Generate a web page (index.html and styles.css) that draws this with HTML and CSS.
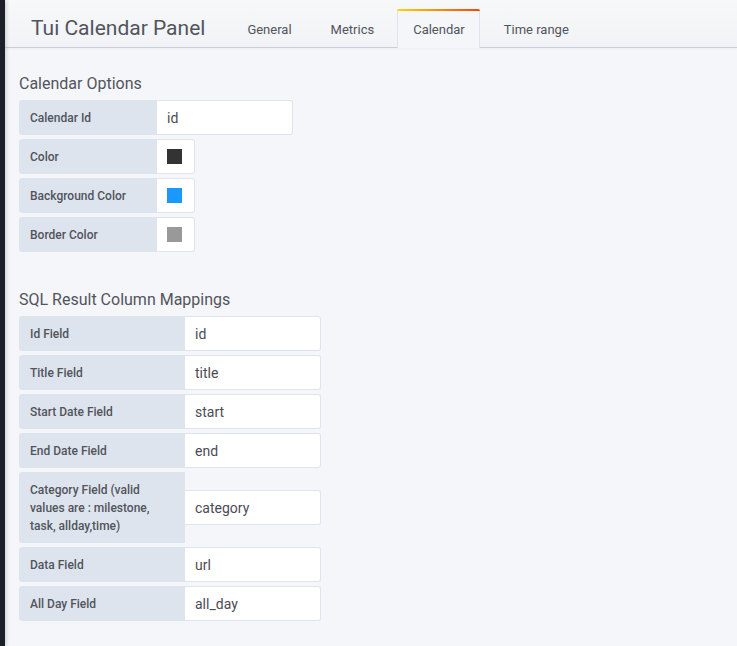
FILE: index.html
```html
<!DOCTYPE html>
<html>
<head>
<meta charset="utf-8">
<link rel="stylesheet" href="styles.css">
</head>
<body>
<div class="app">
  <div class="sidebar"></div>
  <div class="main">
    <header class="edit-header">
      <h2 class="edit-title">Tui Calendar Panel</h2>
      <ul class="tabs">
        <li class="tab">General</li>
        <li class="tab">Metrics</li>
        <li class="tab active">Calendar</li>
        <li class="tab">Time range</li>
      </ul>
    </header>
    <div class="content">
      <section class="section">
        <h5 class="section-heading">Calendar Options</h5>
        <div class="form">
          <span class="label w-short">Calendar Id</span>
          <input class="input" value="id">
        </div>
        <div class="form">
          <span class="label w-short">Color</span>
          <span class="color-box"><span class="swatch swatch-dark"></span></span>
        </div>
        <div class="form">
          <span class="label w-short">Background Color</span>
          <span class="color-box"><span class="swatch swatch-blue"></span></span>
        </div>
        <div class="form">
          <span class="label w-short">Border Color</span>
          <span class="color-box"><span class="swatch swatch-gray"></span></span>
        </div>
      </section>
      <section class="section section-second">
        <h5 class="section-heading">SQL Result Column Mappings</h5>
        <div class="form">
          <span class="label w-long">Id Field</span>
          <input class="input" value="id">
        </div>
        <div class="form">
          <span class="label w-long">Title Field</span>
          <input class="input" value="title">
        </div>
        <div class="form">
          <span class="label w-long">Start Date Field</span>
          <input class="input" value="start">
        </div>
        <div class="form">
          <span class="label w-long">End Date Field</span>
          <input class="input" value="end">
        </div>
        <div class="form form-tall">
          <span class="label w-long label-wrap">Category Field (valid values are : milestone, task, allday,time)</span>
          <input class="input" value="category">
        </div>
        <div class="form">
          <span class="label w-long">Data Field</span>
          <input class="input" value="url">
        </div>
        <div class="form">
          <span class="label w-long">All Day Field</span>
          <input class="input" value="all_day">
        </div>
      </section>
    </div>
  </div>
</div>
</body>
</html>
```

FILE: styles.css
```css
* { box-sizing: border-box; }
html, body {
  margin: 0;
  padding: 0;
  height: 100%;
}
body {
  font-family: Roboto, "Liberation Sans", sans-serif;
  color: #52545c;
  background: #f5f6f9;
}
.app {
  display: flex;
  min-height: 100vh;
}
.sidebar {
  width: 5px;
  flex: 0 0 5px;
  background: #1d2027;
  box-shadow: 1px 0 4px rgba(0, 0, 0, 0.18);
  z-index: 2;
}
.main {
  flex: 1;
  min-width: 0;
}
.edit-header {
  height: 48px;
  display: flex;
  align-items: flex-end;
  padding-left: 26px;
  background: linear-gradient(to bottom, #f7f8fa 0%, #f1f3f6 100%);
  border-bottom: 1px solid #c7d0d9;
  box-shadow: 0 1px 3px rgba(0,0,0,0.04);
}
.edit-title {
  margin: 0 26px 0 0;
  font-size: 21px;
  font-weight: 400;
  color: #52545c;
  line-height: 38px;
  height: 38px;
}
.tabs {
  list-style: none;
  margin: 0 0 -1px 0;
  padding: 0;
  display: flex;
  gap: 8px;
}
.tab {
  position: relative;
  height: 39px;
  padding: 0 14px 0 15px;
  display: flex;
  align-items: center;
  font-size: 13px;
  color: #52545c;
  border: 1px solid transparent;
  border-bottom: none;
}
.tab.active {
  background: #f5f6f9;
  border-color: #dde4ed;
  border-radius: 3px 3px 0 0;
}
.tab.active::before {
  content: "";
  position: absolute;
  left: -1px;
  right: -1px;
  top: -1px;
  height: 2px;
  border-radius: 2px 2px 0 0;
  background: linear-gradient(to right, #ffd500, #ff8c00 50%, #ff4400);
}
.content {
  padding: 26px 14px 20px 14px;
}
.section-heading {
  margin: 0 0 6px 0;
  font-size: 16px;
  font-weight: 400;
  line-height: 20px;
  color: #52545c;
}
.section-second {
  margin-top: 38px;
}
.form {
  display: flex;
  align-items: center;
  margin-bottom: 4px;
}
.label {
  display: flex;
  align-items: center;
  height: 35px;
  padding: 0 11px;
  background: #dde4ed;
  border-radius: 3px 0 0 3px;
  font-size: 12px;
  font-weight: 500;
  color: #52545c;
  white-space: nowrap;
}
.w-short { width: 138px; }
.w-long { width: 166px; }
.label-wrap {
  white-space: normal;
  height: 71px;
  line-height: 18px;
  padding-right: 16px;
}
.input {
  height: 35px;
  width: 136px;
  padding: 0 10px;
  background: #fff;
  border: 1px solid #dde4ed;
  border-left: none;
  border-radius: 0 3px 3px 0;
  font-family: Roboto, "Liberation Sans", sans-serif;
  font-size: 14px;
  color: #4a4c54;
  outline: none;
}
.color-box {
  display: flex;
  align-items: center;
  height: 35px;
  width: 38px;
  padding-left: 10px;
  background: #fff;
  border: 1px solid #dde4ed;
  border-left: none;
  border-radius: 0 3px 3px 0;
}
.swatch {
  display: block;
  width: 15px;
  height: 15px;
}
.swatch-dark { background: #333333; }
.swatch-blue { background: #1a98fc; }
.swatch-gray { background: #999999; }
```
